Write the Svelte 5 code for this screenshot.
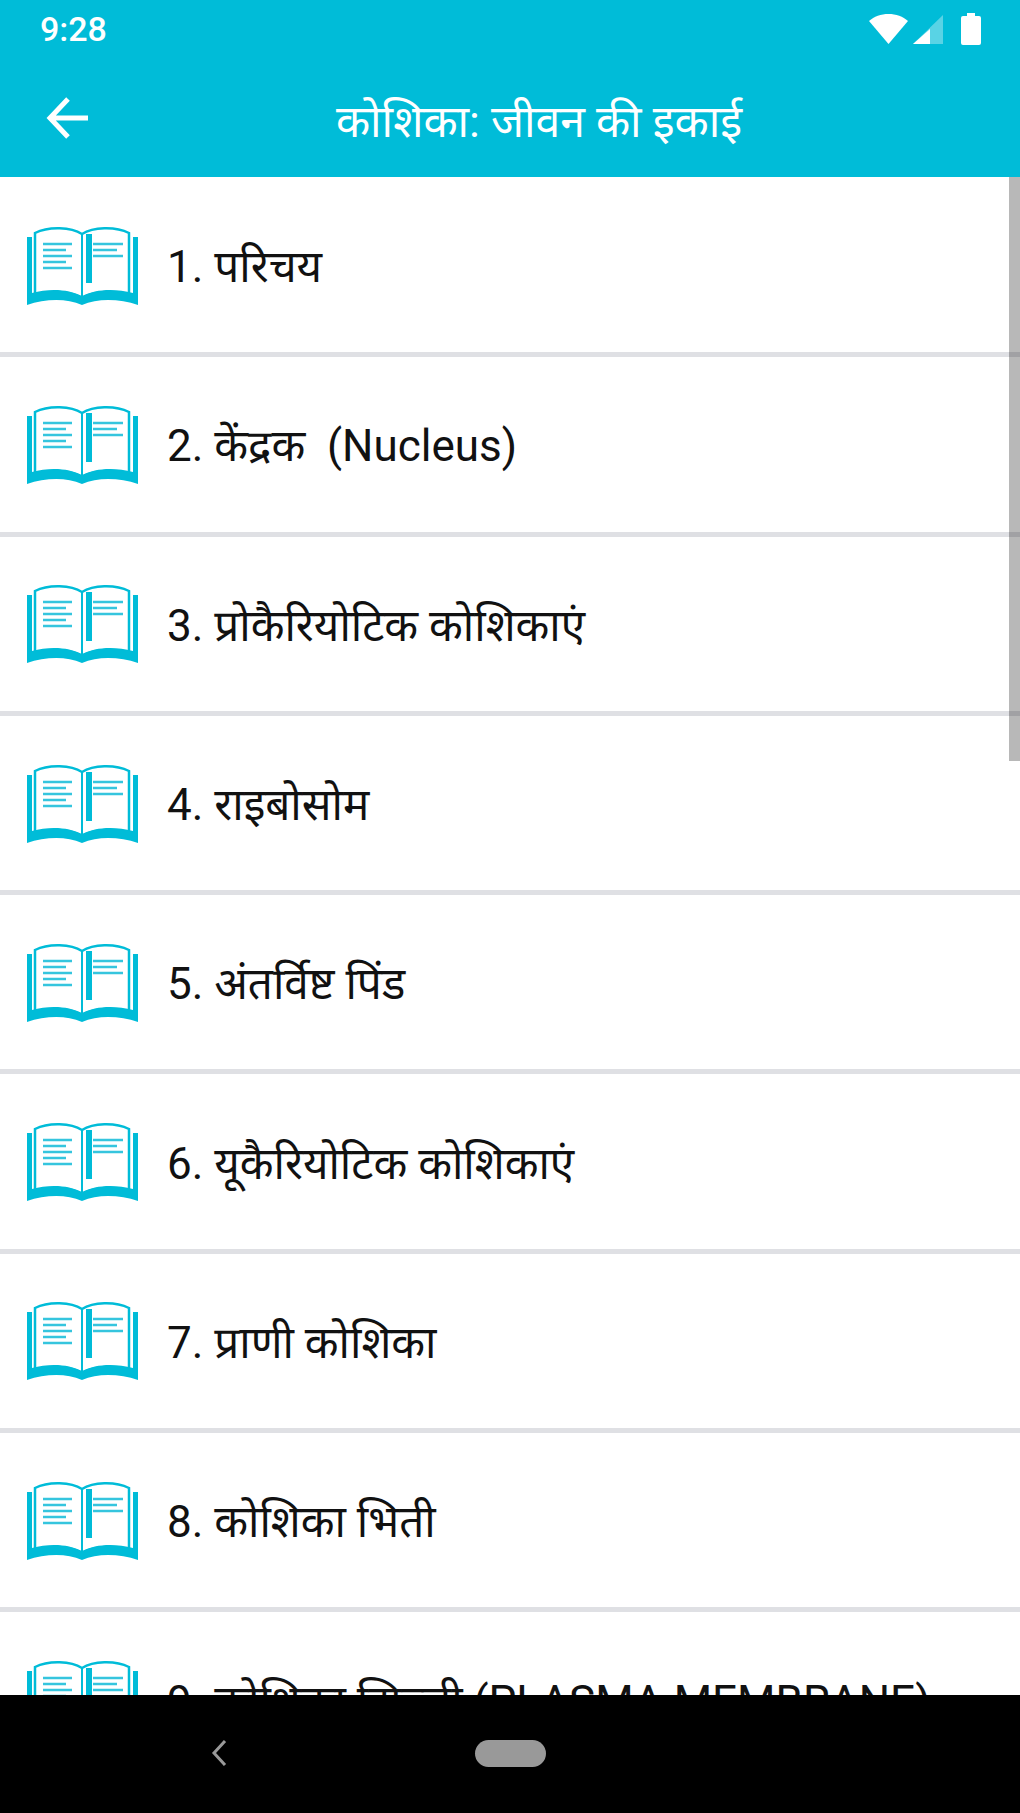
<script>
  const items = [
    '1. परिचय',
    '2. केंद्रक  (Nucleus)',
    '3. प्रोकैरियोटिक कोशिकाएं',
    '4. राइबोसोम',
    '5. अंतर्विष्ट पिंड',
    '6. यूकैरियोटिक कोशिकाएं',
    '7. प्राणी कोशिका',
    '8. कोशिका भिती',
    '9. कोशिका झिल्ली (PLASMA MEMBRANE)'
  ];
</script>

<div class="screen">
  <header class="top">
    <div class="status">
      <span class="time">9:28</span>
      <div class="status-icons">
        <svg class="wifi" width="39" height="30" viewBox="0 0 39 30">
          <path d="M0 7C5 2.500 12 0 19.500 0S34 2.500 39 7L19.500 30z" fill="#fff" />
        </svg>
        <svg class="signal" width="30" height="29" viewBox="0 0 30 29">
          <path d="M30 0V29H0z" fill="#fff" fill-opacity=".35" />
          <path d="M17 14V29H0z" fill="#fff" />
        </svg>
        <svg class="battery" width="20" height="32" viewBox="0 0 20 32">
          <path d="M6 0h8v3h4q2 0 2 2v25q0 2-2 2H2q-2 0-2-2V5q0-2 2-2h4z" fill="#fff" />
        </svg>
      </div>
    </div>
    <div class="bar">
      <svg class="back" width="42" height="42" viewBox="0 0 42 42">
        <path d="M22 2 4 21l18 19M4 21h38" fill="none" stroke="#fff" stroke-width="5" />
      </svg>
      <h1>कोशिका: जीवन की इकाई</h1>
    </div>
  </header>

  <div class="list">
    {#each items as item}
      <div class="row">
        <svg class="book" width="111" height="79" viewBox="0 0 111 79">
          <path d="M55 8C44 1 22 0 8 7v62c16-5 35-4 47 3 12-7 31-8 47-3V7C88 0 66 1 55 8z" fill="#fff" stroke="#00bcd8" stroke-width="2.500" />
          <path d="M0 11h5v56c17-5 37-4 50 3 13-7 33-8 51-3V11h5v68c-18-6-40-7-56 0C39 72 18 73 0 79z" fill="#00bcd8" />
          <path d="M55 7v64" fill="none" stroke="#00bcd8" stroke-width="2" />
          <path d="M59 8h6v49h-6z" fill="#00bcd8" />
          <path d="M16 18h29M16 24h23M16 30h29M16 36h23M16 42h29M66 18h30M66 24h24M66 30h30" fill="none" stroke="#35c5de" stroke-width="2.500" />
        </svg>
        <span class="label">{item}</span>
      </div>
    {/each}
    <div class="thumb"></div>
  </div>

  <nav class="nav">
    <svg class="nav-back" width="18" height="26" viewBox="0 0 18 26">
      <path d="M14 1 3 13l11 12" fill="none" stroke="#999" stroke-width="3" />
    </svg>
    <div class="home"></div>
  </nav>
</div>

<style>
  :global(body) {
    margin: 0;
    background: #fff;
  }

  .screen {
    width: 1020px;
    height: 1813px;
    display: flex;
    flex-direction: column;
    overflow: hidden;
    font-family: Roboto, "Noto Sans Devanagari", "Noto Sans", sans-serif;
  }

  .top {
    height: 177px;
    background: #00bcd8;
    color: #fff;
    flex: none;
  }

  .status {
    height: 58px;
    display: flex;
    align-items: center;
    justify-content: space-between;
    padding: 0 39px 0 40px;
  }

  .time {
    font-size: 34px;
    font-weight: 500;
  }

  .status-icons {
    display: flex;
    align-items: center;
    gap: 5px;
  }

  .battery {
    margin-left: 13px;
  }

  .bar {
    height: 119px;
    position: relative;
    display: flex;
    align-items: center;
    justify-content: center;
  }

  .back {
    position: absolute;
    left: 46px;
    top: 39px;
  }

  h1 {
    margin: 15px 0 0 58px;
    font-size: 44.500px;
    font-weight: 400;
  }

  .list {
    flex: 1;
    min-height: 0;
    overflow: hidden;
    position: relative;
    padding-top: 1px;
  }

  .row {
    height: 179.300px;
    box-sizing: border-box;
    border-bottom: 5px solid #dfe0e4;
    display: flex;
    align-items: center;
    gap: 29px;
    padding-left: 27px;
  }

  .book {
    flex: none;
  }

  .label {
    font-size: 44px;
    color: #111;
    white-space: pre;
    margin-top: 11px;
  }

  .thumb {
    position: absolute;
    top: 0;
    right: 0;
    width: 11px;
    height: 584px;
    background: rgba(0, 0, 0, 0.28);
  }

  .nav {
    height: 118px;
    background: #000;
    flex: none;
    position: relative;
  }

  .nav-back {
    position: absolute;
    left: 211px;
    top: 45px;
  }

  .home {
    position: absolute;
    left: 475px;
    top: 45px;
    width: 71px;
    height: 27px;
    border-radius: 14px;
    background: #999;
  }
</style>
